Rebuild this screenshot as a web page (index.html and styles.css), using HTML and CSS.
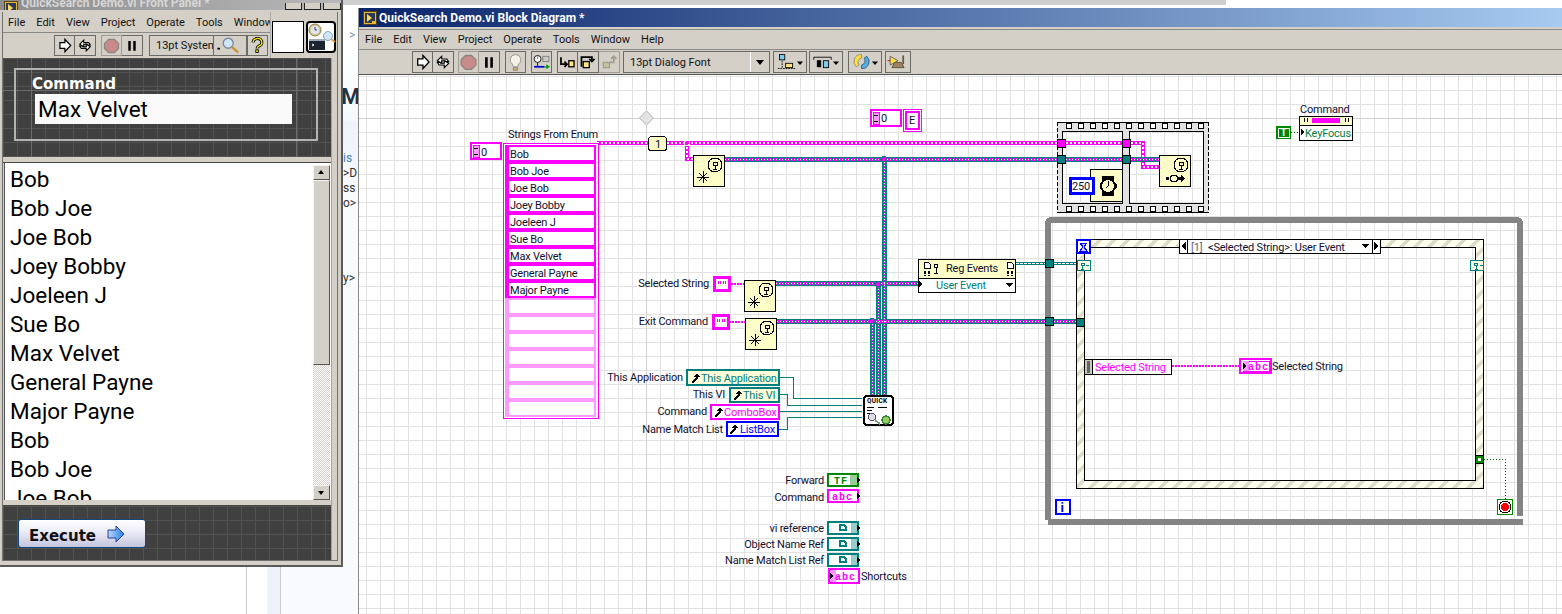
FILE: index.html
```html
<!DOCTYPE html>
<html lang="en">
<head>
  <meta charset="UTF-8">
  <title>QuickSearch Demo.vi</title>
  <link rel="stylesheet" href="styles.css">
</head>
<body>
  <svg class="icon-defs" width="0" height="0">
    <symbol id="i-vi" viewBox="0 0 14 14"><rect x=".5" y=".5" width="13" height="13" fill="#e8b830" stroke="#54420f"/><rect x="2" y="2" width="10" height="10" fill="#2c3a58"/><path d="M4 3l5 4-5 4z" fill="#f4d860"/><path d="M9 10h3v2H9z" fill="#e8b830"/></symbol>
    <symbol id="i-run" viewBox="0 0 21 23"><path d="M5 8h6V4l7 7.500-7 7.500v-4H5z" fill="#fff" stroke="#000" stroke-width="1.500"/></symbol>
    <symbol id="i-cont" viewBox="0 0 21 23"><path d="M4 10 9 5v3h6l2 3h-3l-1-1H9v3zM17 13l-5 5v-3H6l-2-3h3l1 1h4v-3z" fill="#fff" stroke="#000" stroke-width="1.300"/></symbol>
    <symbol id="i-stop" viewBox="0 0 21 23"><path d="M7 4h7l5 5v6l-5 5H7l-5-5V9z" fill="#c98a8a" stroke="#8a8580" stroke-width="1.500"/></symbol>
    <symbol id="i-pause" viewBox="0 0 21 23"><path d="M6 6h3v12H6zM12 6h3v12h-3z" fill="#000"/></symbol>
    <symbol id="i-bulb" viewBox="0 0 21 23"><path d="M10.500 3a6 6 0 0 0-3.500 11l1 3h5l1-3a6 6 0 0 0-3.500-11z" fill="#f4f2e8" stroke="#8a8a80"/><path d="M8 18h5v3H8z" fill="#c8b060" stroke="#8a8a80"/></symbol>
    <symbol id="i-retain" viewBox="0 0 21 23"><circle cx="6" cy="8" r="4" fill="#fff" stroke="#000"/><path d="M6 5v3M12 5h7v6h-7z" fill="#ccc" stroke="#777"/><path d="M2 17h12" stroke="#00c" stroke-width="2"/><path d="M14 17h5M16 15l3 2-3 2" fill="none" stroke="#090" stroke-width="1.500"/><path d="M6 12v5" stroke="#000"/></symbol>
    <symbol id="i-into" viewBox="0 0 21 23"><path d="M3 6v8h6M7 11l3 3-3 3" fill="none" stroke="#000" stroke-width="2"/><rect x="12" y="10" width="6" height="7" fill="#ffe680" stroke="#000" stroke-width="1.500"/></symbol>
    <symbol id="i-over" viewBox="0 0 21 23"><path d="M3 17V6h12v3M12 8l3 3 3-3" fill="none" stroke="#000" stroke-width="2"/><rect x="5" y="11" width="7" height="7" fill="#ffe680" stroke="#000" stroke-width="1.500"/></symbol>
    <symbol id="i-out" viewBox="0 0 21 23"><rect x="4" y="12" width="7" height="6" fill="#c8c4a0" stroke="#a09c90" stroke-width="1.500"/><path d="M11 12h5V6M13 8l3-3 3 3" fill="none" stroke="#a09c90" stroke-width="2"/></symbol>
    <symbol id="i-align" viewBox="0 0 34 23"><rect x="5" y="3" width="6" height="6" fill="#7ecbf0" stroke="#000"/><rect x="12" y="13" width="8" height="5" fill="#ffe680" stroke="#000"/><path d="M3 19h20M8 10v8" stroke="#000" stroke-dasharray="2 1"/><path d="M25 11h7l-3.500 4z"/></symbol>
    <symbol id="i-dist" viewBox="0 0 34 23"><path d="M3 6h20M3 6v3M23 6v3" fill="none" stroke="#000"/><rect x="7" y="10" width="4" height="7" stroke="#000"/><rect x="14" y="10" width="6" height="8" fill="#7ecbf0" stroke="#000"/><path d="M25 11h7l-3.500 4z"/></symbol>
    <symbol id="i-order" viewBox="0 0 34 23"><path d="M13 3a8 8 0 0 0-6 14l3-2a5 5 0 0 1 3-8z" fill="#ffe040" stroke="#887"/><path d="M13 19a8 8 0 0 0 6-14l-3 2a5 5 0 0 1-3 8z" fill="#50b0e0" stroke="#357"/><path d="M25 11h7l-3.500 4z"/></symbol>
    <symbol id="i-clean" viewBox="0 0 26 23"><path d="M4 5l9 5-9 5z" fill="#ffe040" stroke="#555"/><path d="M6 18h14l-3-6h-8z" fill="#a08060" stroke="#553"/><path d="M19 4v10" stroke="#654" stroke-width="2"/><path d="M1 10h3" stroke="#c00"/></symbol>
    <symbol id="i-search" viewBox="0 0 34 21"><circle cx="15" cy="8" r="5.500" fill="#cfe6fa" stroke="#7a8a9a" stroke-width="1.500"/><path d="M19 12l7 6" stroke="#c89030" stroke-width="2.500"/><path d="M3 13h3v2H3z"/></symbol>
    <symbol id="i-help" viewBox="0 0 22 21"><path d="M6 7a5 4.500 0 1 1 7 4c-2 1-2.500 2-2.500 3" fill="none" stroke="#000" stroke-width="3.500"/><path d="M6 7a5 4.500 0 1 1 7 4c-2 1-2.500 2-2.500 3" fill="none" stroke="#ffee00" stroke-width="1.500"/><rect x="9" y="15.500" width="3" height="3" fill="#ffee00" stroke="#000"/></symbol>
  </svg>

  <div class="desktop">
    <div class="page-top"></div>
    <div class="page-strip">
      <span class="page-bc">&gt;</span>
      <span class="page-head">Me</span>
      <span class="page-line page-link">is</span>
      <span class="page-line">&gt;D</span>
      <span class="page-line">ss</span>
      <span class="page-line">o&gt;</span>
      <span class="page-line page-last">y&gt;</span>
    </div>
    <div class="page-foot">
      <div class="foot-rule"></div>
      <div class="foot-side"></div>
    </div>

    <!-- front panel window -->
    <div class="front-window">
      <div class="front-title">
        <svg class="vi-glyph vi-glyph-small"><use href="#i-vi"/></svg>
        <span class="front-title-text">QuickSearch Demo.vi Front Panel *</span>
        <div class="win-btns">
          <div class="win-btn"></div>
          <div class="win-btn"></div>
          <div class="win-btn win-btn-close"></div>
        </div>
      </div>
      <div class="front-client">
        <div class="front-head">
          <div class="front-bars">
            <div class="menu front-menu">
              <span>File</span><span>Edit</span><span>View</span><span>Project</span><span>Operate</span><span>Tools</span><span>Window</span>
            </div>
            <div class="tools front-tools">
              <div class="tb-group">
                <div class="tb-btn"><svg><use href="#i-run"/></svg></div>
                <div class="tb-btn"><svg><use href="#i-cont"/></svg></div>
              </div>
              <div class="tb-group ml5">
                <div class="tb-btn tb-off"><svg><use href="#i-stop"/></svg></div>
                <div class="tb-btn"><svg><use href="#i-pause"/></svg></div>
              </div>
              <div class="tb-font tb-font-front ml6">13pt System</div>
              <div class="tb-btn tb-search"><svg><use href="#i-search"/></svg></div>
              <div class="tb-btn"><svg><use href="#i-help"/></svg></div>
            </div>
          </div>
          <div class="front-icons">
            <div class="vi-icon-box"></div>
            <svg class="vi-conn" viewBox="0 0 30 32">
              <rect x="1" y="1" width="28" height="30" rx="3" fill="#fff" stroke="#000" stroke-width="2"/>
              <circle cx="9" cy="9" r="6" fill="#d8c890" stroke="#8a7a50"/>
              <circle cx="9" cy="9" r="4" fill="#dfe8f2"/>
              <path d="M9 6v3h2" fill="none" stroke="#445"/>
              <rect x="3" y="18" width="16" height="11" fill="#1c2430"/>
              <path d="M3 18h16v2H3z" fill="#9ab"/>
              <path d="M6 23l2 1-2 1" fill="none" stroke="#fff"/>
              <circle cx="22" cy="15" r="4.500" fill="#cfe6fa" stroke="#8aa"/>
              <path d="M25 18l4 3" stroke="#e8a020" stroke-width="2"/>
            </svg>
          </div>
        </div>
        <div class="front-body">
          <div class="front-panes">
            <div class="dark-pane cmd-pane">
              <div class="cmd-frame">
                <div class="cmd-label">Command</div>
                <div class="cmd-value">Max Velvet</div>
              </div>
            </div>
            <div class="splitter"></div>
            <div class="listbox">
              <div class="list-items">
                <div>Bob</div>
                <div>Bob Joe</div>
                <div>Joe Bob</div>
                <div>Joey Bobby</div>
                <div>Joeleen J</div>
                <div>Sue Bo</div>
                <div>Max Velvet</div>
                <div>General Payne</div>
                <div>Major Payne</div>
                <div>Bob</div>
                <div>Bob Joe</div>
                <div>Joe Bob</div>
              </div>
              <div class="list-scroll">
                <div class="sb-btn sb-up"></div>
                <div class="sb-thumb"></div>
                <div class="sb-track"></div>
                <div class="sb-btn sb-down"></div>
              </div>
            </div>
            <div class="splitter"></div>
            <div class="dark-pane exec-pane">
              <button class="exec-btn">
                Execute
                <svg class="exec-arrow" viewBox="0 0 18 18">
                  <defs><linearGradient id="arrow-fill" x1="0" x2="1"><stop offset="0" stop-color="#b8d8f8"/><stop offset="1" stop-color="#2a80e8"/></linearGradient></defs>
                  <path d="M1 5h8V1l8 8-8 8v-4H1z" fill="url(#arrow-fill)" stroke="#2a3f9a"/>
                </svg>
              </button>
            </div>
          </div>
          <div class="front-edge"></div>
        </div>
      </div>
    </div>

    <!-- block diagram window -->
    <div class="diagram-window">
      <div class="diagram-title">
        <svg class="vi-glyph"><use href="#i-vi"/></svg>
        <span>QuickSearch Demo.vi Block Diagram *</span>
      </div>
      <div class="menu diagram-menu">
        <span>File</span><span>Edit</span><span>View</span><span>Project</span><span>Operate</span><span>Tools</span><span>Window</span><span>Help</span>
      </div>
      <div class="tools diagram-tools">
        <div class="tb-group">
          <div class="tb-btn"><svg><use href="#i-run"/></svg></div>
          <div class="tb-btn"><svg><use href="#i-cont"/></svg></div>
        </div>
        <div class="tb-group ml4">
          <div class="tb-btn tb-off"><svg><use href="#i-stop"/></svg></div>
          <div class="tb-btn"><svg><use href="#i-pause"/></svg></div>
        </div>
        <div class="tb-btn ml5"><svg><use href="#i-bulb"/></svg></div>
        <div class="tb-btn ml5"><svg><use href="#i-retain"/></svg></div>
        <div class="tb-group ml5">
          <div class="tb-btn"><svg><use href="#i-into"/></svg></div>
          <div class="tb-btn"><svg><use href="#i-over"/></svg></div>
          <div class="tb-btn tb-off"><svg><use href="#i-out"/></svg></div>
        </div>
        <div class="tb-font tb-font-diagram ml3">
          <span>13pt Dialog Font</span>
          <span class="tb-font-arrow"></span>
        </div>
        <div class="tb-btn tb-wide ml3"><svg><use href="#i-align"/></svg></div>
        <div class="tb-btn tb-wide ml2"><svg><use href="#i-dist"/></svg></div>
        <div class="tb-btn tb-wide ml5"><svg><use href="#i-order"/></svg></div>
        <div class="tb-btn tb-clean ml3"><svg><use href="#i-clean"/></svg></div>
      </div>

      <svg class="canvas" viewBox="359 75 1203 539">
        <defs>
          <pattern id="grid" x="2" y="6" width="14" height="14" patternUnits="userSpaceOnUse">
            <path d="M0 .5H14M.5 0V14" stroke="#e2e2e2" fill="none"/>
          </pattern>
          <pattern id="hatch" x="0" y="0" width="14" height="14" patternUnits="userSpaceOnUse">
            <rect width="14" height="14" fill="#fffff0"/>
            <path d="M-7 14 7 0h5L-2 14zM7 14 21 0h5L12 14z" fill="#dcdcc8"/>
          </pattern>
          <pattern id="film" x="1063" y="122" width="12" height="83" patternUnits="userSpaceOnUse">
            <rect x="3.500" y="1.500" width="5" height="5" fill="#fff" stroke="#000"/>
          </pattern>

          <path id="wires-string" d="M597 143H648M667 143H1058M1066 143H1122M1131 143H1143V167H1159M687 143V159H693"/>
          <path id="wires-event" d="M725 159.500H1058M1066 159.500H1122M1131 159.500H1159M884.500 159V395M776 283.500H918M878.500 283V395M777 321.500H1045M1054 321.500H1076M872.500 321V395"/>

          <g id="node-create">
            <rect x=".5" y=".5" width="31" height="31" fill="#fdfdc8" stroke="#000"/>
            <circle cx="22" cy="10" r="7" fill="#fdfdc8" stroke="#000"/>
            <path d="M20 7h4v3h-4zM22 10v4M20 14h4" fill="none" stroke="#000"/>
            <path d="M10 16v12M4 22h12M6 18l8 8M14 18l-8 8" stroke="#000"/>
          </g>
          <g id="node-destroy">
            <rect x=".5" y=".5" width="31" height="31" fill="#fdfdc8" stroke="#000"/>
            <circle cx="22" cy="10" r="7" fill="#fdfdc8" stroke="#000"/>
            <path d="M20 7h4v3h-4zM22 10v4M20 14h4" fill="none" stroke="#000"/>
            <rect x="7" y="22" width="3" height="3"/>
            <circle cx="15" cy="23.500" r="3.500" fill="#fdfdc8" stroke="#000"/>
            <path d="M19 22h3v-2l4 3.500-4 3.500v-2h-3z"/>
          </g>
          <g id="string-const">
            <rect x="1.500" y="1.500" width="15" height="13" fill="#fff" stroke="#f0f" stroke-width="3"/>
            <path d="M5 5v3M7 5v3M10 5v3M12 5v3" stroke="#f0f"/>
          </g>
          <g id="ref-arrow">
            <path d="M1 10 6 5H3.500L7 2l3 3H8v1L3 11z" fill="#000"/>
          </g>
          <g id="term-ref">
            <rect x="1" y="1" width="30" height="12" fill="#fff" stroke="#007f7f" stroke-width="2"/>
            <rect x="24" y="2" width="6" height="10" fill="#9cc"/>
            <path d="M30 4l3 3-3 3z"/>
            <path d="M13 4h4l2 2v3h-6z" fill="none" stroke="#007f7f" stroke-width="1.500"/>
          </g>
        </defs>

        <rect x="359" y="75" width="1203" height="539" fill="url(#grid)"/>
        <path class="grid-major" d="M646.500 75V614M359 118.500H1562"/>
        <path class="diamond" d="M646.500 111 653.500 118 646.500 125 639.500 118z"/>

        <!-- thin wires -->
        <path class="w-thin-pink" d="M731 284H744M729 322H745M1172 366H1239"/>
        <path class="w-thin-teal" d="M779 377.500H793.500V398.500H862M779 394.500H787.500V405.500H862M779 411.500H862M779 429.500H787.500V417.500H862"/>
        <path class="w-dot-green" d="M1484 459.500H1505.500V499M1291 132.500H1299"/>
        <path class="w-ref" d="M1016 263.500H1045M1054 263.500H1077"/>
        <path class="w-ref-dash" d="M1016 263.500H1045M1054 263.500H1077"/>

        <!-- sequence structure -->
        <path class="film-body" fill-rule="evenodd" d="M1057 122H1209V213H1057zM1062 131V204H1123V131zM1129 131V204H1204V131z"/>
        <rect x="1062" y="122" width="142" height="8" fill="url(#film)"/>
        <rect x="1062" y="205" width="142" height="8" fill="url(#film)"/>
        <path class="film-edge" d="M1057.500 122V213M1208.500 122V213"/>
        <path class="film-line" d="M1057 122.500H1209M1057 212.500H1209M1062.500 131V204M1122.500 131V204M1129.500 131V204M1203.500 131V204M1062 131.500H1123M1129 131.500H1204M1062 203.500H1123M1129 203.500H1204"/>

        <!-- wires over the frames -->
        <use href="#wires-string" class="w-pink"/>
        <use href="#wires-string" class="w-white-dot"/>
        <use href="#wires-event" class="w-teal"/>
        <use href="#wires-event" class="w-teal-core"/>
        <use href="#wires-event" class="w-pink-dot"/>
        <circle class="junction" cx="687" cy="143" r="2.500"/>
        <circle class="junction-ev" cx="884" cy="159" r="2.500"/>
        <circle class="junction-ev" cx="878" cy="284" r="2.500"/>
        <circle class="junction-ev" cx="872" cy="321" r="2.500"/>

        <rect class="tun-pink" x="1057.500" y="139.500" width="8" height="8"/>
        <rect class="tun-pink" x="1122.500" y="139.500" width="8" height="8"/>
        <rect class="tun-teal" x="1057.500" y="155.500" width="8" height="8"/>
        <rect class="tun-teal" x="1122.500" y="155.500" width="8" height="8"/>

        <!-- enum constant and labels -->
        <rect class="box-pink" x="871" y="110" width="30" height="16"/>
        <rect class="box-spin" x="873" y="112" width="6" height="12"/>
        <path class="spin-tick" d="M874 115h4M874 121h4"/>
        <text class="lbl" x="881" y="122">0</text>
        <rect class="box-pink-thin" x="903.500" y="109.500" width="18" height="22"/>
        <rect class="box-pink" x="906" y="112" width="13" height="17"/>
        <text class="lbl" x="909" y="124">E</text>

        <!-- array constant -->
        <text class="lbl" x="508" y="138">Strings From Enum</text>
        <rect class="box-pink" x="471" y="143" width="30" height="16"/>
        <rect class="box-spin" x="473" y="145" width="6" height="12"/>
        <path class="spin-tick" d="M474 148h4M474 154h4"/>
        <text class="lbl" x="481" y="156">0</text>
        <rect class="array-outer" x="503.500" y="143.500" width="95" height="275"/>
        <rect class="array-used" x="505" y="145" width="91" height="153"/>
        <rect class="array-empty" x="505" y="298" width="91" height="119"/>
        <g class="array-cells">
          <rect x="509" y="147" width="85" height="13"/>
          <rect x="509" y="164" width="85" height="13"/>
          <rect x="509" y="181" width="85" height="13"/>
          <rect x="509" y="198" width="85" height="13"/>
          <rect x="509" y="215" width="85" height="13"/>
          <rect x="509" y="232" width="85" height="13"/>
          <rect x="509" y="249" width="85" height="13"/>
          <rect x="509" y="266" width="85" height="13"/>
          <rect x="509" y="283" width="85" height="13"/>
          <rect x="509" y="300" width="85" height="13"/>
          <rect x="509" y="317" width="85" height="13"/>
          <rect x="509" y="334" width="85" height="13"/>
          <rect x="509" y="351" width="85" height="13"/>
          <rect x="509" y="368" width="85" height="13"/>
          <rect x="509" y="385" width="85" height="13"/>
          <rect x="509" y="402" width="85" height="13"/>
        </g>
        <text class="lbl" x="510" y="158">Bob</text>
        <text class="lbl" x="510" y="175">Bob Joe</text>
        <text class="lbl" x="510" y="192">Joe Bob</text>
        <text class="lbl" x="510" y="209">Joey Bobby</text>
        <text class="lbl" x="510" y="226">Joeleen J</text>
        <text class="lbl" x="510" y="243">Sue Bo</text>
        <text class="lbl" x="510" y="260">Max Velvet</text>
        <text class="lbl" x="510" y="277">General Payne</text>
        <text class="lbl" x="510" y="294">Major Payne</text>

        <!-- index constant on the wire -->
        <rect class="const-num" x="648.500" y="136.500" width="18" height="14" rx="3"/>
        <text class="lbl" x="655" y="148">1</text>

        <!-- event refnum nodes -->
        <use href="#node-create" x="693" y="155"/>
        <use href="#node-create" x="744" y="280"/>
        <use href="#node-create" x="745" y="318"/>
        <use href="#node-destroy" x="1159" y="155"/>

        <text class="lbl end" x="709" y="287">Selected String</text>
        <use href="#string-const" x="713" y="276"/>
        <text class="lbl end" x="708" y="325">Exit Command</text>
        <use href="#string-const" x="712" y="314"/>

        <!-- wait node -->
        <rect class="node" x="1090.500" y="169.500" width="32" height="32"/>
        <rect x="1102" y="176" width="12" height="4"/>
        <rect x="1102" y="192" width="12" height="4"/>
        <circle cx="1108" cy="186" r="7" fill="#fdfdc8" stroke="#000" stroke-width="2"/>
        <path d="M1108 181v5l-2 2" fill="none" stroke="#000"/>
        <rect x="1115" y="184" width="2" height="4"/>
        <rect class="box-blue" x="1070" y="178" width="23" height="15"/>
        <text class="lbl" x="1072" y="190">250</text>

        <!-- property references -->
        <text class="lbl end" x="683" y="381">This Application</text>
        <rect class="ref-teal" x="687" y="370" width="92" height="15"/>
        <use href="#ref-arrow" x="690" y="372"/>
        <text class="lbl txt-teal" x="701" y="382">This Application</text>

        <text class="lbl end" x="725" y="398">This VI</text>
        <rect class="ref-teal" x="730" y="388" width="49" height="14"/>
        <use href="#ref-arrow" x="732" y="389"/>
        <text class="lbl txt-teal" x="743" y="399">This VI</text>

        <text class="lbl end" x="707" y="415">Command</text>
        <rect class="ref-pink" x="711" y="405" width="68" height="14"/>
        <use href="#ref-arrow" x="713" y="406"/>
        <text class="lbl txt-pink" x="724" y="416">ComboBox</text>

        <text class="lbl end" x="723" y="433">Name Match List</text>
        <rect class="ref-blue" x="727" y="422" width="51" height="14"/>
        <use href="#ref-arrow" x="728" y="423"/>
        <text class="lbl txt-blue" x="740" y="433">ListBox</text>

        <!-- quick search subvi -->
        <rect class="quick-box" x="864" y="396" width="29" height="29" rx="3"/>
        <text class="quick-txt" x="867" y="403">QUICK</text>
        <path d="M867 407h7M867 410h5M867 413h5M878 407h9" stroke="#000"/>
        <circle cx="872" cy="417" r="3.500" fill="#dde" stroke="#555"/>
        <path d="M875 420l5 4" stroke="#7a7" stroke-width="2"/>
        <circle cx="886" cy="420" r="4" fill="#9c6" stroke="#383" stroke-width="1.500"/>

        <!-- register for events -->
        <rect class="node" x="918.500" y="259.500" width="97" height="33"/>
        <path d="M918 278.500H1016" stroke="#000"/>
        <rect x="919" y="279" width="96" height="13" fill="#fff"/>
        <path d="M924 262h4l2 2v4h-6zM1007 262h4l2 2v4h-6z" fill="#fff" stroke="#000"/>
        <path d="M925 271v5M929 271v5M1008 271v5M1012 271v5" stroke="#000" stroke-width="2" stroke-dasharray="3 1"/>
        <circle cx="936" cy="266" r="2" fill="none" stroke="#000"/>
        <path d="M936 268v5M934 273h4" stroke="#000"/>
        <text class="lbl" x="946" y="272">Reg Events</text>
        <path d="M919 280l3 4-3 4z"/>
        <text class="lbl txt-teal" x="936" y="289">User Event</text>
        <path d="M1005 283h8l-4 4z"/>

        <!-- while loop -->
        <path class="loop" d="M1048 519.500V223a3 3 0 0 1 3-3H1517a3 3 0 0 1 3 3V516M1523 521.500H1048"/>
        <rect class="tun-teal" x="1045.500" y="259.500" width="8" height="8"/>
        <rect class="tun-teal" x="1045.500" y="317.500" width="8" height="8"/>
        <rect x="1056" y="500" width="14" height="14" fill="#fffff0" stroke="#00f" stroke-width="2"/>
        <text class="iter" x="1060.500" y="512">i</text>
        <rect x="1497.500" y="499.500" width="15" height="15" fill="#fffff0" stroke="#080"/>
        <circle cx="1505" cy="507" r="6" fill="#fff" stroke="#000"/>
        <circle cx="1505" cy="507" r="4" fill="#f00"/>

        <!-- event structure -->
        <path class="event-frame" fill-rule="evenodd" d="M1076.500 239.500H1483.500V488.500H1076.500zM1084.500 247.500V480.500H1475.500V247.500z"/>
        <rect class="box-blue-hour" x="1077" y="240" width="13" height="13"/>
        <path d="M1080 243h7l-3 4 3 4h-7l3-4z" fill="#cce" stroke="#00f"/>
        <g class="ev-node">
          <rect x="1077" y="260.500" width="13" height="10"/>
          <rect x="1470.500" y="260.500" width="13" height="10"/>
        </g>
        <path class="ev-glyph" d="M1081 263h3v2h-3zM1082.500 265v4M1081 269h3M1086 265.500h3M1474.500 263h3v2h-3zM1476 265v4M1474.500 269h3M1479.500 265.500h3"/>
        <rect class="tun-teal" x="1076.500" y="318.500" width="8" height="8"/>
        <rect class="tun-green" x="1475.500" y="455.500" width="8" height="8"/>
        <rect x="1478" y="458" width="3" height="3" fill="#fff"/>

        <!-- case selector -->
        <rect class="sel-box" x="1179.500" y="239.500" width="201" height="14"/>
        <path d="M1187.500 239V253M1372.500 239V253" stroke="#000"/>
        <path d="M1186 242v8l-5-4zM1374 242v8l5-4zM1362 244h7l-3.500 4z"/>
        <text class="lbl txt-gray" x="1191" y="251">[1]</text>
        <text class="lbl" x="1208" y="251">&lt;Selected String&gt;: User Event</text>

        <!-- event data node -->
        <rect x="1084.500" y="359.500" width="87" height="15" fill="#fff" stroke="#000"/>
        <rect x="1085" y="360" width="7" height="14" fill="#c8c8b8"/>
        <rect x="1087" y="361" width="3" height="12" fill="#666"/>
        <path d="M1092.500 360v14" stroke="#000"/>
        <text class="lbl txt-pink" x="1095" y="371">Selected String</text>
        <rect class="term-pink" x="1240" y="359" width="31" height="14"/>
        <rect class="term-pink-in" x="1243" y="361" width="26" height="10"/>
        <rect x="1243" y="361" width="6" height="10" fill="#ff99ff"/>
        <path d="M1243 363l3 3-3 3z"/>
        <text class="abc" x="1248" y="370">abc</text>
        <text class="lbl" x="1272" y="370">Selected String</text>

        <!-- keyfocus property -->
        <text class="lbl" x="1300" y="113">Command</text>
        <rect x="1299.500" y="116.500" width="53" height="24" fill="#fff" stroke="#000"/>
        <rect x="1300" y="117" width="52" height="8" fill="#fdfdc8"/>
        <path d="M1299 125.500H1353" stroke="#000"/>
        <rect x="1312" y="118" width="28" height="5" fill="#f0f"/>
        <path d="M1304 118v4M1307 118v4M1345 118v4M1348 118v4" stroke="#000"/>
        <path d="M1301 129l3 3-3 3z"/>
        <text class="lbl txt-green" x="1305" y="137">KeyFocus</text>
        <rect x="1276" y="126" width="15" height="13" fill="#080"/>
        <rect x="1278" y="128" width="11" height="9" fill="none" stroke="#fff"/>
        <text class="t-const" x="1280.500" y="136">T</text>

        <!-- bottom terminals -->
        <text class="lbl end" x="824" y="484">Forward</text>
        <rect x="828" y="474" width="30" height="12" fill="#fff" stroke="#080" stroke-width="2"/>
        <rect x="850" y="475" width="7" height="10" fill="#9c9"/>
        <path d="M857 477l3 3-3 3z"/>
        <text class="tf" x="834" y="484">TF</text>

        <text class="lbl end" x="824" y="501">Command</text>
        <rect class="term-pink" x="828" y="490" width="30" height="12"/>
        <text class="abc" x="832" y="500">abc</text>
        <path d="M857 493l3 3-3 3z"/>

        <text class="lbl end" x="824" y="532">vi reference</text>
        <use href="#term-ref" x="827" y="521"/>
        <text class="lbl end" x="824" y="548">Object Name Ref</text>
        <use href="#term-ref" x="827" y="537"/>
        <text class="lbl end" x="824" y="564">Name Match List Ref</text>
        <use href="#term-ref" x="827" y="553"/>

        <rect class="term-pink" x="829" y="569" width="30" height="14"/>
        <rect x="830" y="570" width="6" height="12" fill="#ff99ff"/>
        <path d="M830 573l3 3-3 3z"/>
        <text class="abc" x="835" y="580">abc</text>
        <text class="lbl" x="861" y="580">Shortcuts</text>
      </svg>
    </div>
  </div>
</body>
</html>
```

FILE: styles.css
```css
body {
  margin: 0;
  background: #fff;
  font-family: Roboto, "Liberation Sans", sans-serif;
  overflow: hidden;
}

.icon-defs {
  position: absolute;
}

.desktop {
  position: relative;
  width: 1562px;
  height: 614px;
  overflow: hidden;
  background: #fff;
}

/* browser page behind the windows */
.page-top {
  position: absolute;
  left: 0;
  top: 0;
  width: 1226px;
  height: 5px;
  background: #cfcfcf;
}

.page-strip {
  position: absolute;
  left: 343px;
  top: 20px;
  width: 15px;
  height: 547px;
  display: flex;
  flex-direction: column;
  overflow: hidden;
  background: linear-gradient(#fff 0, #fff 28px, #f4f7fc 100px, #eef3fb 102px, #f8fafe 180px);
  font-size: 12px;
  color: #333;
}

.page-bc {
  margin-top: 8px;
  padding-left: 6px;
  color: #89a;
}

.page-head {
  margin-top: 42px;
  font-size: 22px;
  font-weight: bold;
  color: #234;
  margin-left: -2px;
}

.page-line {
  height: 15px;
  line-height: 15px;
}

.page-link {
  margin-top: 42px;
  color: #3a80c0;
}

.page-last {
  margin-top: 60px;
}

.page-foot {
  position: absolute;
  left: 0;
  top: 567px;
  width: 358px;
  height: 47px;
  display: flex;
}

.foot-rule {
  margin-left: 246px;
  width: 21px;
  border-left: 1px solid #c8ccd0;
  box-sizing: border-box;
}

.foot-side {
  flex: 1;
  background: linear-gradient(90deg, #eef2fa 13px, #c8ccd0 13px, #c8ccd0 14px, #f8faff 14px);
}

/* shared window parts */
.vi-glyph {
  width: 14px;
  height: 14px;
  margin: 0 2px 0 4px;
  flex: none;
}

.vi-glyph-small {
  margin: 0 3px -5px 4px;
}

.menu {
  display: flex;
  align-items: center;
  background: #d4d0c8;
  font-size: 11px;
  color: #111;
}

.tools {
  display: flex;
  align-items: center;
  background: #d4d0c8;
}

.tb-group {
  display: flex;
}

.tb-btn {
  width: 21px;
  height: 22px;
  box-sizing: border-box;
  border: 1px solid #6a6a66;
  flex: none;
}

.tb-group .tb-btn + .tb-btn {
  border-left: 0;
  width: 21px;
}

.tb-off {
  border-color: #a09c94;
}

.tb-btn svg {
  display: block;
  width: 100%;
  height: 100%;
}

.tb-wide {
  width: 34px;
}

.tb-clean {
  width: 26px;
}

.tb-font {
  height: 22px;
  box-sizing: border-box;
  border: 1px solid #6a6a66;
  display: flex;
  align-items: center;
  font-size: 11px;
  color: #111;
  flex: none;
}

.tb-font-front {
  width: 64px;
  padding-left: 6px;
  white-space: nowrap;
  overflow: hidden;
  border-right: 0;
}

.tb-font-diagram {
  width: 147px;
  padding-left: 6px;
  justify-content: space-between;
}

.tb-font-arrow {
  width: 18px;
  height: 20px;
  border-left: 1px solid #fff;
  position: relative;
}

.tb-font-arrow::after {
  content: "";
  position: absolute;
  left: 5px;
  top: 8px;
  border: 4px solid transparent;
  border-top: 5px solid #000;
}

.tb-search {
  width: 34px;
}

.ml2 { margin-left: 2px; }
.ml3 { margin-left: 3px; }
.ml4 { margin-left: 4px; }
.ml5 { margin-left: 5px; }
.ml6 { margin-left: 6px; }

/* front panel window */
.front-window {
  position: absolute;
  left: 0;
  top: 0;
  width: 343px;
  height: 567px;
  box-sizing: border-box;
  display: flex;
  flex-direction: column;
  background: #d4d0c8;
  border-right: 2px solid #5a5a5a;
  border-bottom: 2px solid #5a5a5a;
  padding: 0 3px 4px 2px;
}

.front-title {
  height: 10px;
  margin: 0 -3px 0 -2px;
  display: flex;
  align-items: flex-end;
  overflow: hidden;
  background: linear-gradient(90deg, #8c8c8c, #b8b8b8);
  flex: none;
}

.front-title-text {
  font-size: 12px;
  font-weight: bold;
  color: #d6d6d6;
  line-height: 14px;
  flex: none;
}

.win-btns {
  margin-left: auto;
  display: flex;
  gap: 2px;
}

.win-btn {
  width: 17px;
  height: 7px;
  box-sizing: border-box;
  background: #d4d0c8;
  border: 1px solid #222;
  border-top: 0;
}

.win-btn-close {
  width: 18px;
}

.front-client {
  flex: 1;
  margin-top: 2px;
  display: flex;
  flex-direction: column;
  min-height: 0;
  border: 1px solid #707070;
  border-top: 0;
}

.front-head {
  height: 46px;
  display: flex;
  flex: none;
}

.front-bars {
  width: 267px;
  display: flex;
  flex-direction: column;
  overflow: hidden;
}

.front-menu {
  height: 20px;
  gap: 11px;
  padding-left: 5px;
  flex: none;
  white-space: nowrap;
  border-bottom: 1px solid #8a8a86;
}

.front-tools {
  flex: 1;
  padding-left: 51px;
}

.front-tools .tb-btn,
.front-tools .tb-font {
  height: 21px;
}

.front-icons {
  flex: 1;
  display: flex;
  align-items: center;
  gap: 2px;
  padding: 4px 0 0 1px;
  box-sizing: border-box;
  border-left: 1px solid #aaa;
}

.vi-icon-box {
  width: 32px;
  height: 32px;
  box-sizing: border-box;
  background: #fff;
  border: 1px solid #000;
}

.vi-conn {
  width: 30px;
  height: 32px;
}

.front-body {
  flex: 1;
  display: flex;
  min-height: 0;
}

.front-panes {
  flex: 1;
  display: flex;
  flex-direction: column;
  min-width: 0;
}

.front-edge {
  width: 6px;
  background: #d4d0c8;
  border-left: 1px solid #a8a49c;
  box-sizing: border-box;
}

.dark-pane {
  background-color: #404040;
  background-image: linear-gradient(#525252 1px, transparent 1px), linear-gradient(90deg, #525252 1px, transparent 1px);
  background-size: 14px 14px;
}

.cmd-pane {
  height: 99px;
  box-sizing: border-box;
  padding: 10px 0 0 11px;
  flex: none;
  background-image:
    linear-gradient(#6c6c6c, #6c6c6c),
    linear-gradient(#6c6c6c, #6c6c6c),
    linear-gradient(#6c6c6c, #6c6c6c),
    linear-gradient(#525252 1px, transparent 1px),
    linear-gradient(90deg, #525252 1px, transparent 1px);
  background-size: 1px 100%, 1px 100%, 100% 1px, 14px 14px, 14px 14px;
  background-position: 28px 0, 293px 0, 0 32px, 0 0, 0 0;
  background-repeat: no-repeat, no-repeat, no-repeat, repeat, repeat;
}

.cmd-frame {
  width: 304px;
  height: 73px;
  box-sizing: border-box;
  border: 2px solid #b4b4b4;
  padding: 6px 0 0 16px;
}

.cmd-label {
  font-family: "DejaVu Sans", sans-serif;
  font-size: 15px;
  font-weight: bold;
  line-height: 16px;
  color: #fff;
}

.cmd-value {
  width: 257px;
  height: 30px;
  margin: 2px 0 0 3px;
  padding-left: 3px;
  box-sizing: border-box;
  background: #fafafa;
  font-size: 22.5px;
  line-height: 30px;
  color: #000;
}

.splitter {
  height: 6px;
  background: #d4d0c8;
  border-bottom: 1px solid #444;
  box-sizing: border-box;
  flex: none;
}

.listbox {
  height: 337px;
  display: flex;
  flex: none;
  box-sizing: border-box;
  margin: 0 0 0 1px;
  padding: 2px 1px 0 0;
  background: #fff;
  overflow: hidden;
  border-left: 1px solid #555;
}

.list-items {
  flex: 1;
  padding-left: 5px;
  font-size: 22.5px;
  line-height: 29px;
  color: #000;
}

.list-scroll {
  width: 17px;
  display: flex;
  flex-direction: column;
}

.sb-btn {
  height: 15px;
  background: #d4d0c8;
  border: 1px solid;
  border-color: #f4f4f0 #555 #555 #f4f4f0;
  box-sizing: border-box;
  position: relative;
}

.sb-up::after,
.sb-down::after {
  content: "";
  position: absolute;
  left: 4px;
  border: 3.5px solid transparent;
}

.sb-up::after {
  top: 1px;
  border-bottom: 4px solid #000;
}

.sb-down::after {
  top: 5px;
  border-top: 4px solid #000;
}

.sb-thumb {
  height: 185px;
  background: #d4d0c8;
  border: 1px solid;
  border-color: #f4f4f0 #555 #555 #f4f4f0;
  box-sizing: border-box;
}

.sb-track {
  flex: 1;
  background: repeating-conic-gradient(#d4d0c8 0 25%, #fff 0 50%) 0 0 / 2px 2px;
}

.exec-pane {
  flex: 1;
  padding: 13px 0 0 15px;
}

.exec-btn {
  width: 128px;
  height: 29px;
  display: flex;
  align-items: center;
  gap: 11px;
  padding: 4px 0 0 10px;
  box-sizing: border-box;
  border: 1px solid #12477f;
  border-radius: 3px;
  background: linear-gradient(#fff, #eeeef8 40%, #c4c4de);
  font-family: "DejaVu Sans", sans-serif;
  font-size: 15px;
  font-weight: bold;
  color: #111;
}

.exec-arrow {
  width: 18px;
  height: 18px;
  margin-top: -4px;
}

/* block diagram window */
.diagram-window {
  position: absolute;
  left: 358px;
  top: 8px;
  width: 1204px;
  height: 606px;
  display: flex;
  flex-direction: column;
  box-sizing: border-box;
  background: #d4d0c8;
  border-left: 1px solid #8a8a8a;
}

.diagram-title {
  height: 19px;
  display: flex;
  align-items: center;
  flex: none;
  background: linear-gradient(90deg, #0a246a, #a6caf0);
  color: #fff;
  font-size: 12px;
  font-weight: bold;
  white-space: nowrap;
}

.diagram-menu {
  height: 21px;
  margin-top: 2px;
  gap: 11px;
  padding-left: 6px;
  flex: none;
  border-top: 1px solid #8a8a86;
  border-bottom: 1px solid #8a8a86;
  box-sizing: border-box;
}

.diagram-tools {
  height: 25px;
  padding-left: 53px;
  flex: none;
  border-bottom: 1px solid #555;
  box-sizing: border-box;
}

.canvas {
  display: block;
  width: 1203px;
  height: 539px;
  flex: none;
  background: #fff;
  shape-rendering: crispEdges;
}

/* diagram text */
.lbl {
  font-size: 11px;
  letter-spacing: -.2px;
  fill: #101030;
}

.end {
  text-anchor: end;
}

.txt-teal { fill: #007f7f; }
.txt-pink { fill: #f0f; }
.txt-blue { fill: #00f; }
.txt-green { fill: #008040; }
.txt-gray { fill: #667; }

.abc,
.tf {
  font-family: "Liberation Mono", monospace;
  font-size: 10px;
  font-weight: bold;
  letter-spacing: 1px;
}

.abc { fill: #f0f; }
.tf { fill: #080; }

.quick-txt {
  font-size: 6.5px;
  font-weight: bold;
  letter-spacing: .3px;
}

.iter {
  font-size: 13px;
  font-weight: bold;
  fill: #00f;
}

.t-const {
  font-size: 10px;
  font-weight: bold;
  fill: #fff;
}

/* diagram wires */
.grid-major {
  stroke: #d0d0d0;
  fill: none;
}

.diamond {
  fill: #e4e4e4;
  stroke: #cfcfcf;
}

.w-pink,
.w-white-dot,
.w-pink-dot,
.w-teal,
.w-teal-core,
.w-thin-pink,
.w-thin-teal,
.w-dot-green,
.w-ref,
.w-ref-dash {
  fill: none;
}

.w-pink {
  stroke: #f0f;
  stroke-width: 4;
}

.w-white-dot {
  stroke: #fff;
  stroke-width: 2;
  stroke-dasharray: 2 2;
}

.w-pink-dot {
  stroke: #fff;
  stroke-width: 1;
  stroke-dasharray: 1 2;
}

.w-teal {
  stroke: #007f7f;
  stroke-width: 5;
}

.w-teal-core {
  stroke: #f0f;
  stroke-width: 3;
  stroke-dasharray: 2 1;
}

.w-thin-pink {
  stroke: #f0f;
  stroke-width: 2;
  stroke-dasharray: 2 1;
}

.w-thin-teal {
  stroke: #007f7f;
}

.w-dot-green {
  stroke: #006400;
  stroke-dasharray: 1 2;
}

.w-ref {
  stroke: #007f7f;
  stroke-width: 3;
}

.w-ref-dash {
  stroke: #fff;
  stroke-dasharray: 3 1;
}

.junction {
  fill: #f0f;
  stroke: #fff;
}

.junction-ev {
  fill: #f0f;
  stroke: #007f7f;
}

/* diagram boxes */
.node {
  fill: #fdfdc8;
  stroke: #000;
}

.box-pink {
  fill: #fff;
  stroke: #f0f;
  stroke-width: 2;
}

.box-pink-thin {
  fill: #fff;
  stroke: #f0f;
}

.box-spin {
  fill: #ff99ff;
  stroke: #f0f;
}

.spin-tick {
  stroke: #000;
}

.box-blue {
  fill: #fff;
  stroke: #00f;
  stroke-width: 3;
}

.box-blue-hour {
  fill: #fff;
  stroke: #00f;
  stroke-width: 2;
}

.array-outer {
  fill: #fff;
  stroke: #f0f;
}

.array-used { fill: #f0f; }
.array-empty { fill: #ff99ff; }
.array-cells rect { fill: #fff; }

.const-num {
  fill: #fdfdc8;
  stroke: #000;
}

.film-body { fill: #e2e2e2; }

.film-edge {
  stroke: #000;
  stroke-dasharray: 4 2;
  fill: none;
}

.film-line {
  stroke: #000;
  fill: none;
}

.tun-pink {
  fill: #f0f;
  stroke: #000;
}

.tun-teal {
  fill: #007f7f;
  stroke: #000;
}

.tun-green {
  fill: #080;
  stroke: #000;
}

.ref-teal {
  fill: #fdfdd8;
  stroke: #007f7f;
  stroke-width: 2;
}

.ref-pink {
  fill: #fff;
  stroke: #f0f;
  stroke-width: 2;
}

.ref-blue {
  fill: #fff;
  stroke: #00f;
  stroke-width: 2;
}

.quick-box {
  fill: #fff;
  stroke: #000;
  stroke-width: 2.5;
}

.loop {
  fill: none;
  stroke: #848484;
  stroke-width: 6;
}

.event-frame {
  fill: url(#hatch);
  stroke: #000;
}

.ev-node rect {
  fill: #fdfde4;
  stroke: #007f7f;
}

.ev-glyph {
  fill: none;
  stroke: #007f7f;
}

.sel-box {
  fill: #fff;
  stroke: #000;
}

.term-pink {
  fill: #fff;
  stroke: #f0f;
  stroke-width: 2;
}

.term-pink-in {
  fill: #fff;
  stroke: #f0f;
}
```
